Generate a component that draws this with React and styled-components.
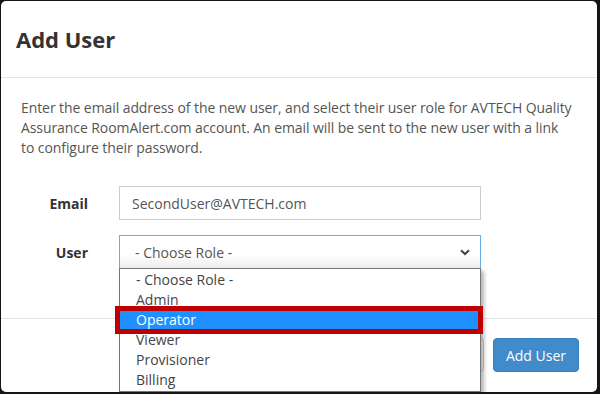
import React from "react";
import styled, { createGlobalStyle } from "styled-components";

const Global = createGlobalStyle`
  html, body { margin: 0; padding: 0; }
  body {
    background: #151515;
    width: 600px;
    height: 394px;
    overflow: hidden;
    font-family: "Open Sans", "Liberation Sans", sans-serif;
  }
  * { box-sizing: border-box; }
`;

const Backdrop = styled.div`
  width: 600px;
  height: 394px;
  padding: 1px 3px 2px 1px;
`;

const Modal = styled.div`
  width: 596px;
  height: 391px;
  background: #fff;
  border-radius: 5px;
  display: flex;
  flex-direction: column;
  overflow: hidden;
`;

const Header = styled.div`
  padding: 24px 15px 24px 15px;
  border-bottom: 1px solid #e5e5e5;
`;

const Title = styled.h4`
  margin: 0;
  font-size: 22px;
  line-height: 28px;
  font-weight: 700;
  color: #333;
`;

const Body = styled.div`
  padding: 20px 15px 0 20px;
  height: 241px;
  border-bottom: 1px solid #e5e5e5;
`;

const Intro = styled.p`
  margin: 0 0 28px 0;
  font-size: 14px;
  line-height: 20px;
  letter-spacing: -0.08px;
  color: #555;
`;

const Row = styled.div`
  display: grid;
  grid-template-columns: 67px 362px;
  column-gap: 31px;
  align-items: center;
  margin-bottom: 15px;
`;

const Label = styled.label`
  text-align: right;
  font-size: 14px;
  font-weight: 700;
  color: #333;
`;

const Input = styled.div`
  height: 34px;
  border: 1px solid #ccc;
  padding: 0 12px;
  display: flex;
  align-items: center;
  font-size: 14px;
  color: #555;
  background: #fff;
`;

const SelectWrap = styled.div`
  position: relative;
`;

const Select = styled.div`
  height: 34px;
  border: 1px solid #66afe9;
  border-bottom: none;
  padding: 0 10px 0 15px;
  display: flex;
  align-items: center;
  justify-content: space-between;
  font-size: 14px;
  color: #555;
  background: linear-gradient(#fff 0%, #fff 55%, #ececec 100%);
`;

const Popup = styled.ul`
  position: absolute;
  top: 33px;
  left: 0;
  width: 362px;
  margin: 0;
  padding: 1px 0 1px 0;
  list-style: none;
  background: #fff;
  border: 1px solid #767676;
  box-shadow: 3px 3px 4px rgba(0, 0, 0, 0.3);
  z-index: 5;
`;

const Option = styled.li`
  position: relative;
  height: 20px;
  line-height: 20px;
  padding-left: 16px;
  font-size: 14px;
  color: ${(p) => (p.$active ? "#fff" : "#444")};
  background: ${(p) => (p.$active ? "#1e90ff" : "transparent")};
`;

const Highlight = styled.span`
  position: absolute;
  top: -4px;
  bottom: -4px;
  left: -5px;
  right: -3px;
  border: 5px solid #c00000;
  pointer-events: none;
`;

const Footer = styled.div`
  display: flex;
  justify-content: flex-end;
  gap: 9px;
  padding: 19px 18px 0 0;
`;

const Button = styled.button`
  height: 34px;
  padding: 0 12px;
  border-radius: 4px;
  font-family: inherit;
  font-size: 14px;
  border: 1px solid ${(p) => (p.$primary ? "#357ebd" : "#ccc")};
  background: ${(p) => (p.$primary ? "#428bca" : "#fff")};
  color: ${(p) => (p.$primary ? "#fff" : "#333")};
`;

const Chevron = () => (
  <svg width="10" height="7" viewBox="0 0 10 7">
    <path d="M1 1.2 L5 5 L9 1.2" fill="none" stroke="#444" strokeWidth="2" />
  </svg>
);

const roles = ["- Choose Role -", "Admin", "Operator", "Viewer", "Provisioner", "Billing"];

export default function App() {
  return (
    <>
      <Global />
      <Backdrop>
        <Modal>
          <Header>
            <Title>Add User</Title>
          </Header>
          <Body>
            <Intro>
              Enter the email address of the new user, and select their user role for AVTECH Quality
              <br />
              Assurance RoomAlert.com account. An email will be sent to the new user with a link
              <br />
              to configure their password.
            </Intro>
            <Row>
              <Label>Email</Label>
              <Input>SecondUser@AVTECH.com</Input>
            </Row>
            <Row>
              <Label>User</Label>
              <SelectWrap>
                <Select>
                  <span>- Choose Role -</span>
                  <Chevron />
                </Select>
                <Popup>
                  {roles.map((r) => (
                    <Option key={r} $active={r === "Operator"}>
                      {r}
                      {r === "Operator" && <Highlight />}
                    </Option>
                  ))}
                </Popup>
              </SelectWrap>
            </Row>
          </Body>
          <Footer>
            <Button>Cancel</Button>
            <Button $primary>Add User</Button>
          </Footer>
        </Modal>
      </Backdrop>
    </>
  );
}
